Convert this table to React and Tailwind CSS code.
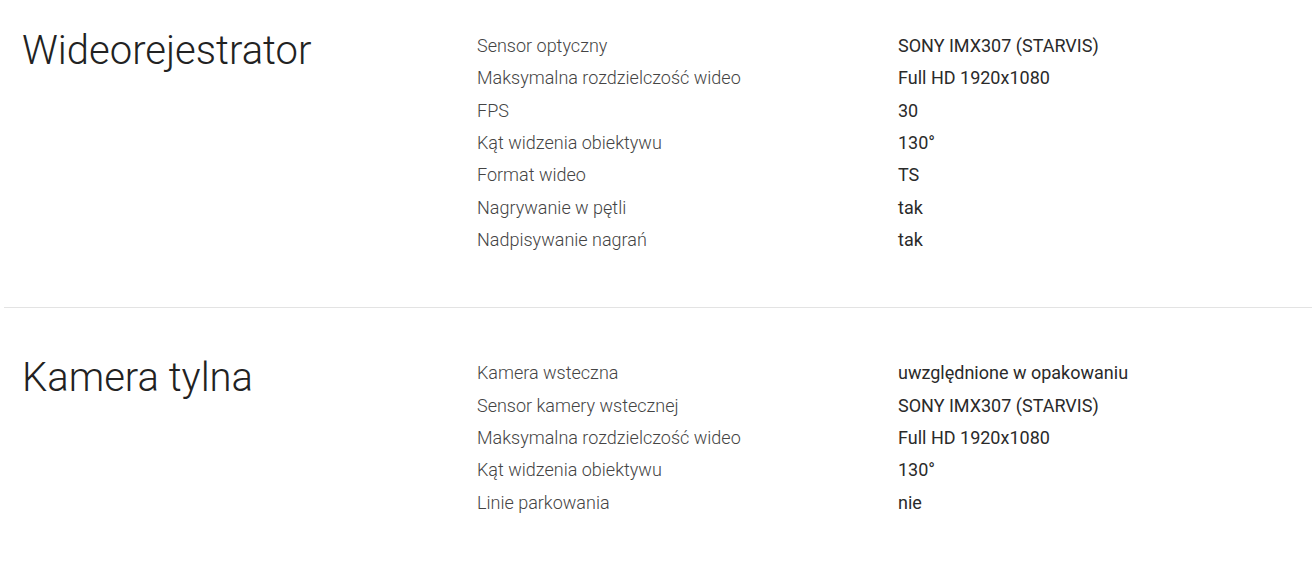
import React from "react";

const sections = [
  {
    title: "Wideorejestrator",
    rows: [
      ["Sensor optyczny", "SONY IMX307 (STARVIS)"],
      ["Maksymalna rozdzielczość wideo", "Full HD 1920x1080"],
      ["FPS", "30"],
      ["Kąt widzenia obiektywu", "130°"],
      ["Format wideo", "TS"],
      ["Nagrywanie w pętli", "tak"],
      ["Nadpisywanie nagrań", "tak"],
    ],
  },
  {
    title: "Kamera tylna",
    rows: [
      ["Kamera wsteczna", "uwzględnione w opakowaniu"],
      ["Sensor kamery wstecznej", "SONY IMX307 (STARVIS)"],
      ["Maksymalna rozdzielczość wideo", "Full HD 1920x1080"],
      ["Kąt widzenia obiektywu", "130°"],
      ["Linie parkowania", "nie"],
    ],
  },
];

export default function App() {
  return (
    <div
      className="w-[1312px] h-[567px] bg-white overflow-hidden pl-[4px]"
      style={{ fontFamily: "Roboto, 'Liberation Sans', sans-serif" }}
    >
      {sections.map((s, i) => (
        <div
          key={s.title}
          className={
            i === 0
              ? "flex pl-[18px] pt-[29px] pb-[51px] border-b border-[#e3e3e3]"
              : "flex pl-[18px] pt-[48px] pb-[50px]"
          }
        >
          <div className="w-[455px] shrink-0 text-[40px] leading-[44px] font-light text-[#222]">
            {s.title}
          </div>
          <div className="flex flex-col mt-[1px]">
            {s.rows.map(([k, v]) => (
              <div key={k} className="flex text-[18px] leading-[32.33px]">
                <div className="w-[421px] shrink-0 font-light text-[#444]">{k}</div>
                <div className="font-normal text-[#2a2a2a]">{v}</div>
              </div>
            ))}
          </div>
        </div>
      ))}
    </div>
  );
}
